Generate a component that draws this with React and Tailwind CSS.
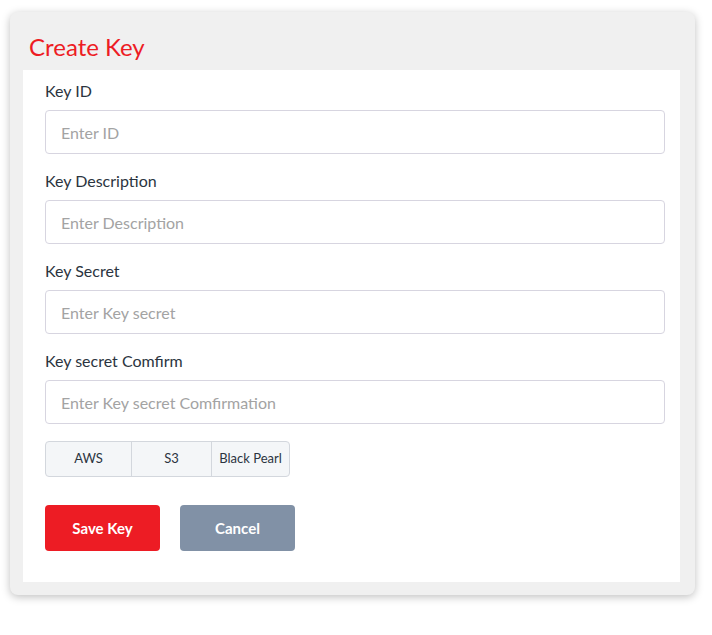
export default function App() {
  const fields = [
    { label: "Key ID", ph: "Enter ID" },
    { label: "Key Description", ph: "Enter Description" },
    { label: "Key Secret", ph: "Enter Key secret" },
    { label: "Key secret Comfirm", ph: "Enter Key secret Comfirmation" },
  ];
  return (
    <div className="w-[712px] h-[635px] bg-white pt-[12px] pl-[10px]" style={{ fontFamily: '"Source Sans Pro", Lato, "Noto Sans", sans-serif' }}>
      <div className="w-[685px] h-[583px] rounded-[8px] bg-[#f0f0f0] shadow-[0_2px_8px_rgba(0,0,0,0.25)] pl-[13px] pr-[15px] pb-[13px] flex flex-col">
        <div className="h-[58px] flex items-end pb-[8px] pl-[6px]">
          <h1 className="text-[24px] leading-[30px] text-[#ed1c24]">Create Key</h1>
        </div>
        <div className="flex-1 bg-white pl-[22px] pr-[15px] pt-[11px]">
          {fields.map((f, i) => (
            <div key={i} className="mb-[17px]">
              <div className="text-[16px] leading-[20px] text-[#2b3440] h-[20px] mb-[9px]">{f.label}</div>
              <input
                placeholder={f.ph}
                className="w-full h-[44px] border border-[#d7d5e0] rounded-[4px] px-[15px] text-[16px] text-[#333] placeholder:text-[#a3a3a3] outline-none"
              />
            </div>
          ))}
          <div className="mt-[5px] flex h-[36px] w-[245px] border border-[#d3d7dd] rounded-[4px] bg-[#f4f6f8] text-[13px] text-[#2b3440] overflow-hidden">
            <div className="w-[86px] flex items-center justify-center border-r border-[#d3d7dd]">AWS</div>
            <div className="w-[80px] flex items-center justify-center border-r border-[#d3d7dd]">S3</div>
            <div className="flex-1 flex items-center justify-center">Black Pearl</div>
          </div>
          <div className="mt-[28px] flex gap-[20px]">
            <button className="w-[115px] h-[46px] rounded-[4px] bg-[#ed1c24] text-white font-bold text-[15px]">Save Key</button>
            <button className="w-[115px] h-[46px] rounded-[4px] bg-[#8191a6] text-white font-bold text-[15px]">Cancel</button>
          </div>
        </div>
      </div>
    </div>
  );
}
